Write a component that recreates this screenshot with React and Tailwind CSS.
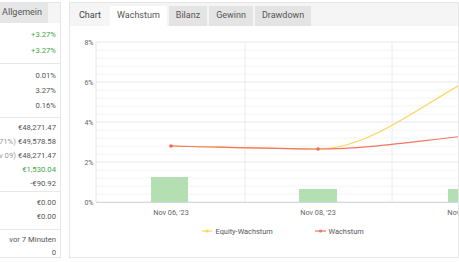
import React from "react";

const font = { fontFamily: "Roboto, 'Liberation Sans', sans-serif" };

const sections = [
  {
    cls: "pt-[4px] pb-[4px]",
    row: "h-[16px]",
    rows: [
      { label: "Gewinn:", value: "+3.27%", green: true },
      { label: "Abs. Gewinn:", value: "+3.27%", green: true },
    ],
  },
  {
    cls: "pt-[4px] pb-[4px]",
    row: "h-[15px]",
    rows: [
      { label: "Täglich:", value: "0.01%" },
      { label: "Monatlich:", value: "3.27%" },
      { label: "Drawdown:", value: "0.16%" },
    ],
  },
  {
    cls: "pt-[3px] pb-0",
    row: "h-[14px]",
    rows: [
      { label: "Kontostand:", value: "€48,271.47" },
      { label: "Equity:", note: "(2.71%)", value: "€49,578.58" },
      { label: "Höchster:", note: "(Nov 09)", value: "€48,271.47" },
      { label: "Gewinn:", value: "€1,530.04", green: true },
      { label: "Zinsen:", value: "-€90.92" },
    ],
  },
  {
    cls: "pt-[4px] pb-[5px]",
    row: "h-[14px]",
    rows: [
      { label: "Einzahlungen:", value: "€0.00" },
      { label: "Auszahlungen:", value: "€0.00" },
    ],
  },
  {
    cls: "pt-[3px] pb-0",
    row: "h-[13px]",
    rows: [
      { label: "Aktualisiert", value: "vor 7 Minuten" },
      { label: "Tracking", value: "0" },
    ],
  },
];

function InfoPanel() {
  return (
    <div className="ml-[-140px] w-[201px] shrink-0 h-[256px] border border-[#e6e6e6] bg-white flex flex-col">
      <div className="h-[23px] bg-[#f5f5f5] flex items-end justify-end pr-[12px] gap-[2px]">
        <div className="h-[20px] px-[7px] flex items-center bg-white text-[9px] text-[#555]">Info</div>
        <div className="h-[20px] px-[6px] flex items-center bg-[#e6e6e6] text-[9px] text-[#555]">Allgemein</div>
      </div>
      {sections.map((s, i) => (
        <div
          key={i}
          className={`${s.cls} ${i < sections.length - 1 ? "border-b border-[#e8e8e8]" : ""}`}
        >
          {s.rows.map((r, j) => (
            <div key={j} className={`${s.row} flex items-center justify-between pl-[6px] pr-[4px] text-[7.7px] leading-none`}>
              <span className="text-[#777]">{r.label}</span>
              <span className={r.green ? "text-[#3ea84b]" : "text-[#555]"}>
                {r.note && <span className="text-[#999] mr-[2px]">{r.note}</span>}
                {r.value}
              </span>
            </div>
          ))}
        </div>
      ))}
    </div>
  );
}

const tabs = ["Wachstum", "Bilanz", "Gewinn", "Drawdown"];

function Chart() {
  const minor = [];
  for (let y = 43; y < 203; y += 8) {
    if ((y - 43) % 40 !== 0) minor.push(y);
  }
  const major = [
    { y: 43, t: "8%" },
    { y: 83, t: "6%" },
    { y: 123, t: "4%" },
    { y: 163, t: "2%" },
    { y: 203, t: "0%" },
  ];
  return (
    <svg width="388" height="229" viewBox="71 27 388 229" className="block">
      {minor.map((y) => (
        <line key={y} x1="97" x2="470" y1={y} y2={y} stroke="#f4f4f4" strokeWidth="1" />
      ))}
      {major.map((m) => (
        <g key={m.y}>
          <line x1="97" x2="470" y1={m.y} y2={m.y} stroke="#e8e8e8" strokeWidth="1" />
          <text x="94.5" y={m.y + 2.5} textAnchor="end" fontSize="7" fill="#666" style={font}>
            {m.t}
          </text>
        </g>
      ))}
      <line x1="246" x2="246" y1="43" y2="203" stroke="#ececec" />
      <line x1="393" x2="393" y1="43" y2="203" stroke="#ececec" />
      <line x1="97" x2="97" y1="43" y2="203" stroke="#e6e6e6" />

      <rect x="152" y="178" width="37" height="25" fill="#b4dfb2" />
      <rect x="300" y="190" width="38" height="13" fill="#b4dfb2" />
      <rect x="449" y="190" width="37" height="13" fill="#b4dfb2" />

      <line x1="97" x2="470" y1="203.5" y2="203.5" stroke="#d6d6ea" />

      <path d="M172,147 C221,148 270,150 319,150 C368,150 417,110 466,83" fill="none" stroke="#ffd45c" strokeWidth="1.2" />
      <path d="M172,147 C221,148 270,150 319,150 C368,150 417,142 466,137" fill="none" stroke="#f07563" strokeWidth="1.2" />
      <circle cx="172" cy="147" r="1.8" fill="#ee6a55" />
      <circle cx="319" cy="150" r="1.8" fill="#ee6a55" />

      <text x="172" y="215.5" textAnchor="middle" fontSize="7.3" fill="#666" style={font}>Nov 06, '23</text>
      <text x="319" y="215.5" textAnchor="middle" fontSize="7.3" fill="#666" style={font}>Nov 08, '23</text>
      <text x="466" y="215.5" textAnchor="middle" fontSize="7.3" fill="#666" style={font}>Nov 09, '23</text>

      <line x1="203" x2="213" y1="232" y2="232" stroke="#ffd45c" strokeWidth="1.2" />
      <circle cx="208" cy="232" r="1.6" fill="#ffd45c" />
      <text x="216.5" y="234.5" fontSize="7.4" fill="#555" style={font}>Equity-Wachstum</text>
      <line x1="316" x2="327" y1="232" y2="232" stroke="#f07563" strokeWidth="1.2" />
      <circle cx="321.5" cy="232" r="1.6" fill="#f07563" />
      <text x="329.5" y="234.5" fontSize="7.4" fill="#555" style={font}>Wachstum</text>
    </svg>
  );
}

function ChartPanel() {
  return (
    <div className="w-[390px] shrink-0 h-[256px] border border-[#e6e6e6] bg-white flex flex-col">
      <div className="h-[23px] bg-[#f5f5f5] flex items-end pl-[9px] gap-[2px]">
        <div className="h-[20px] flex items-center text-[9px] text-[#444] mr-[7px]">Chart</div>
        {tabs.map((t, i) => (
          <div
            key={t}
            className={`h-[20px] px-[7px] flex items-center text-[9px] text-[#555] ${i === 0 ? "bg-white" : "bg-[#e4e4e4]"}`}
          >
            {t}
          </div>
        ))}
      </div>
      <Chart />
    </div>
  );
}

export default function App() {
  return (
    <div className="w-[459px] h-[262px] overflow-hidden bg-white pt-[2px] flex gap-[8px]" style={font}>
      <InfoPanel />
      <ChartPanel />
    </div>
  );
}
